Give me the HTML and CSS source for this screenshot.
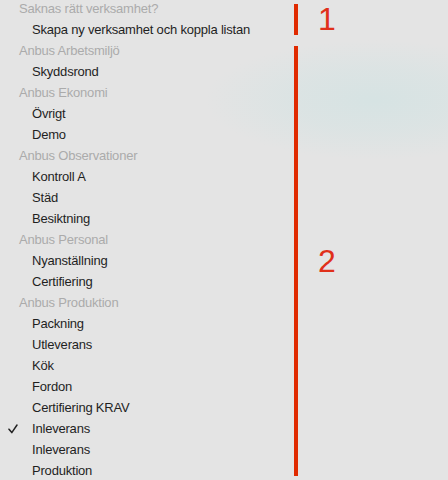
FILE: index.html
```html
<!DOCTYPE html>
<html lang="sv">
<head>
    <meta charset="UTF-8">
    <meta name="viewport" content="width=device-width, initial-scale=1.0">
    <title>Verksamhet</title>
    <link rel="stylesheet" href="styles.css">
</head>
<body>
    <div class="page">
        <ul class="menu">
            <li class="header">Saknas rätt verksamhet?</li>
            <li class="item"><span class="check"></span>Skapa ny verksamhet och koppla listan</li>
            <li class="header">Anbus Arbetsmiljö</li>
            <li class="item"><span class="check"></span>Skyddsrond</li>
            <li class="header">Anbus Ekonomi</li>
            <li class="item"><span class="check"></span>Övrigt</li>
            <li class="item"><span class="check"></span>Demo</li>
            <li class="header">Anbus Observationer</li>
            <li class="item"><span class="check"></span>Kontroll A</li>
            <li class="item"><span class="check"></span>Städ</li>
            <li class="item"><span class="check"></span>Besiktning</li>
            <li class="header">Anbus Personal</li>
            <li class="item"><span class="check"></span>Nyanställning</li>
            <li class="item"><span class="check"></span>Certifiering</li>
            <li class="header">Anbus Produktion</li>
            <li class="item"><span class="check"></span>Packning</li>
            <li class="item"><span class="check"></span>Utleverans</li>
            <li class="item"><span class="check"></span>Kök</li>
            <li class="item"><span class="check"></span>Fordon</li>
            <li class="item"><span class="check"></span>Certifiering KRAV</li>
            <li class="item selected">
                <span class="check">
                    <svg width="10" height="10" viewBox="0 0 10 10">
                        <path d="M1 5.2 L3.8 8.6 L9 1" fill="none" stroke="#222" stroke-width="1.5" stroke-linecap="round" stroke-linejoin="round"/>
                    </svg>
                </span>Inleverans
            </li>
            <li class="item"><span class="check"></span>Inleverans</li>
            <li class="item"><span class="check"></span>Produktion</li>
        </ul>

        <div class="marks">
            <div class="mark mark-one">
                <div class="bar"></div>
                <div class="num">1</div>
            </div>
            <div class="mark mark-two">
                <div class="bar"></div>
                <div class="num">2</div>
            </div>
        </div>
    </div>
</body>
</html>
```

FILE: styles.css
```css
html, body {
    margin: 0;
    height: 100%;
    overflow: hidden;
}
body {
    background-color: #e4e4e4;
    background-image: radial-gradient(ellipse 170px 60px at 375px 100px, #d6e3e3 0%, rgba(214, 227, 227, 0.6) 50%, rgba(228, 228, 228, 0) 100%);
    font-family: "Liberation Sans", Arial, sans-serif;
    font-size: 13px;
    letter-spacing: -0.2px;
}
.page {
    display: flex;
    margin-top: -2px;
}
.menu {
    list-style: none;
    margin: 0;
    padding: 0;
    width: 294px;
}
.menu li {
    height: 21px;
    display: flex;
    align-items: center;
    white-space: nowrap;
}
.header {
    padding-left: 19px;
    color: #ababab;
}
.item {
    padding-left: 8px;
    color: #1f1f1f;
}
.check {
    width: 24px;
    display: flex;
    align-items: center;
}
.marks {
    display: flex;
    flex-direction: column;
}
.mark {
    display: flex;
    align-items: center;
    gap: 20px;
}
.mark-one {
    height: 42px;
}
.mark-two {
    height: 441px;
}
.bar {
    width: 4px;
    align-self: stretch;
    margin: 6px 0 5px;
    background: #e02a00;
}
.num {
    color: #e0301a;
    font-size: 32px;
    line-height: 1;
    letter-spacing: 0;
}
```
